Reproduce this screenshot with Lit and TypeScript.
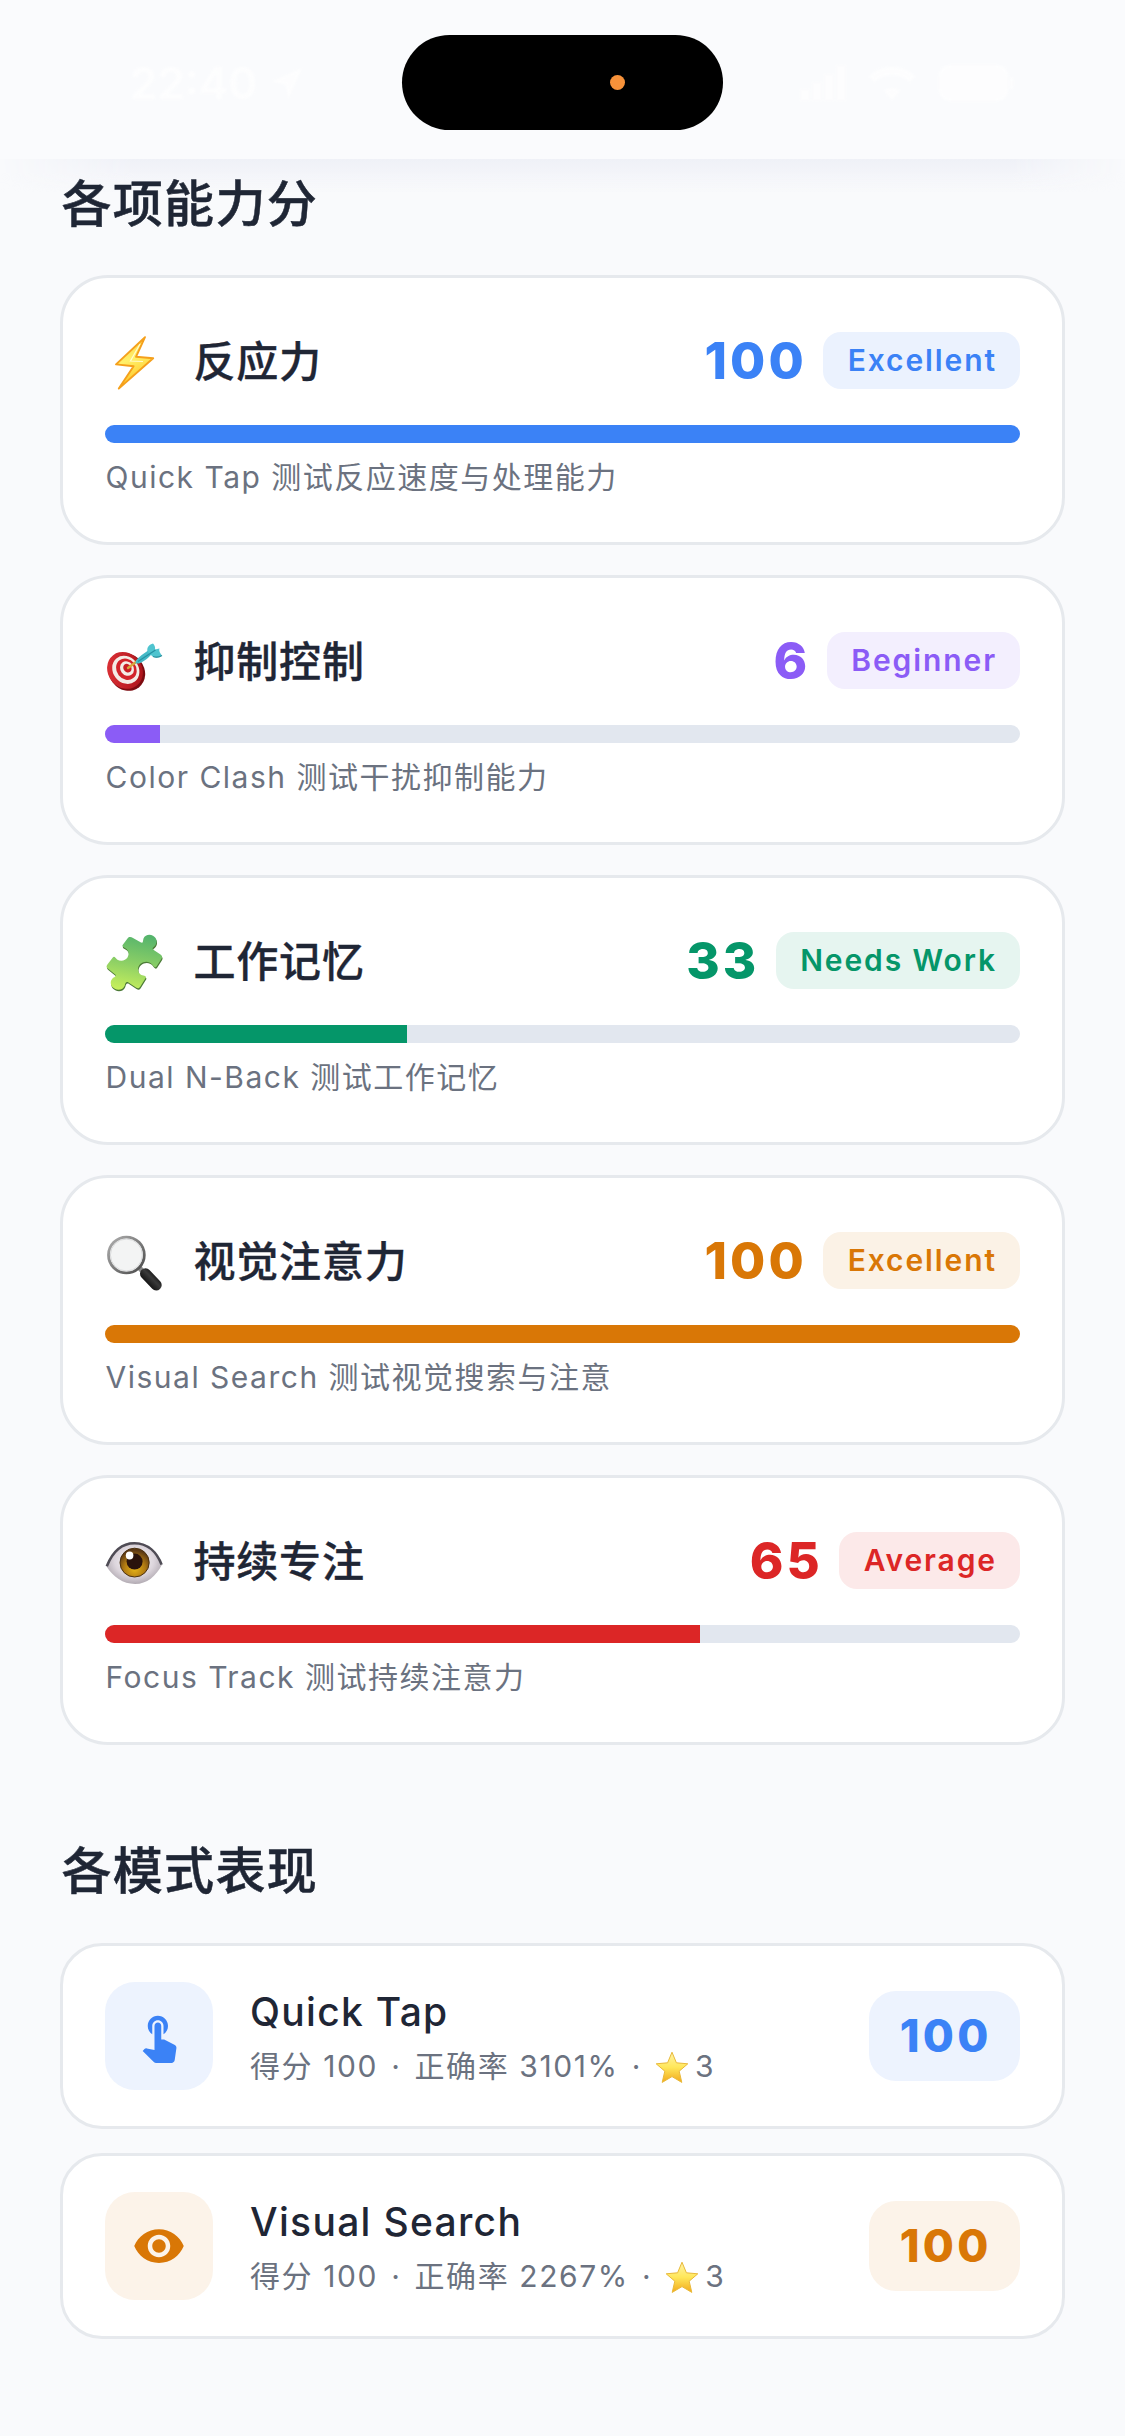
import { LitElement, html, svg, css, type TemplateResult } from "lit";
import { customElement, property } from "lit/decorators.js";
import { styleMap } from "lit/directives/style-map.js";

type Ability = {
  icon: string;
  title: string;
  score: number;
  level: string;
  note: string;
  color: string;
  tint: string;
};

type Mode = {
  icon: string;
  title: string;
  score: number;
  accuracy: string;
  stars: number;
  color: string;
  tint: string;
};

const abilities: Ability[] = [
  { icon: "bolt", title: "反应力", score: 100, level: "Excellent", note: "Quick Tap 测试反应速度与处理能力", color: "#3b82f6", tint: "#ebf2fe" },
  { icon: "dart", title: "抑制控制", score: 6, level: "Beginner", note: "Color Clash 测试干扰抑制能力", color: "#8b5cf6", tint: "#f3effe" },
  { icon: "puzzle", title: "工作记忆", score: 33, level: "Needs Work", note: "Dual N-Back 测试工作记忆", color: "#059669", tint: "#e6f5f0" },
  { icon: "lens", title: "视觉注意力", score: 100, level: "Excellent", note: "Visual Search 测试视觉搜索与注意", color: "#d97706", tint: "#fbf2e6" },
  { icon: "eye", title: "持续专注", score: 65, level: "Average", note: "Focus Track 测试持续注意力", color: "#dc2626", tint: "#fce9e9" },
];

const modes: Mode[] = [
  { icon: "touch", title: "Quick Tap", score: 100, accuracy: "3101%", stars: 3, color: "#3b82f6", tint: "#edf3fe" },
  { icon: "visibility", title: "Visual Search", score: 100, accuracy: "2267%", stars: 3, color: "#d97706", tint: "#fcf3e9" },
];

const pictures: Record<string, TemplateResult> = {
  bolt: svg`
    <defs><linearGradient id="g" x1="0" y1="0" x2="0.3" y2="1">
      <stop offset="0" stop-color="#ffc93a"/><stop offset=".5" stop-color="#fff06a"/><stop offset="1" stop-color="#ffc21f"/>
    </linearGradient></defs>
    <path d="M40 4.2 L11 31.4 L28.6 33.2 L13.8 55.6 L48.2 25.2 L31 23.8 Z" fill="url(#g)" stroke="#f5a01c" stroke-width="1.9" stroke-linejoin="round"/>
    <path d="M35 11 L25.5 28 L38 28.5" fill="none" stroke="#fffbd0" stroke-width="1.2"/>`,
  dart: svg`
    <defs><linearGradient id="g" x1="0" y1="0" x2="1" y2="1">
      <stop offset="0" stop-color="#e2353a"/><stop offset="1" stop-color="#a50f16"/>
    </linearGradient></defs>
    <ellipse cx="21.8" cy="39" rx="17.6" ry="19.6" transform="rotate(-38 21.8 39)" fill="#7d0b10"/>
    <ellipse cx="20" cy="37.4" rx="17" ry="19.3" transform="rotate(-38 20 37.4)" fill="url(#g)"/>
    <ellipse cx="20.8" cy="36.8" rx="12.8" ry="14.8" transform="rotate(-38 20.8 36.8)" fill="#f4ece6"/>
    <ellipse cx="21.4" cy="36.2" rx="9.8" ry="11.2" transform="rotate(-38 21.4 36.2)" fill="#d2232a"/>
    <ellipse cx="22" cy="35.6" rx="6.6" ry="7.6" transform="rotate(-38 22 35.6)" fill="#f4ece6"/>
    <ellipse cx="22.4" cy="35.2" rx="3.9" ry="4.6" transform="rotate(-38 22.4 35.2)" fill="#c91d25"/>
    <path d="M23 35 L33 27.5" stroke="#d8a53b" stroke-width="2.4" stroke-linecap="round"/>
    <path d="M30.5 30.5 C30 26 38 21 43 17.5 L46.5 21.5 C42 26 36 31.5 30.5 30.5Z" fill="#45b9c6"/>
    <path d="M42.5 18.5 C41.5 14 44.5 11.5 48 10.5 C49.5 12 50.5 14 50 16.5 L54.5 15.5 C53.5 18 55.5 20.5 57 22.5 C53.5 25.5 49 25.5 46 22Z" fill="#4fc4cf"/>
    <path d="M33 28.5 L50.5 17" stroke="#2591a3" stroke-width="1.3"/>
    <path d="M48 23.5 C51 24.5 54 24.5 57 22.5" stroke="#2b8e9c" stroke-width="1.2" fill="none"/>`,
  puzzle: svg`
    <defs><linearGradient id="g" x1="0.6" y1="0" x2="0.4" y2="1">
      <stop offset="0" stop-color="#55b46c"/><stop offset=".55" stop-color="#8ed065"/><stop offset="1" stop-color="#c4ee5c"/>
    </linearGradient></defs>
    <path d="M22.5 5.5 C24 3.5 26 3.8 28 5 L36 9.6 C38.5 10.5 37.8 7.5 38.5 5.5 C40 2 44.5 .8 48 2.8 C52 5 52.5 9.5 50.2 12.5 C48.8 14.3 46.8 14.8 48 16.4 L55.5 21.5 C57.3 22.8 57.5 24 56.5 25.8 L51.5 33.5 C50 35.5 48.3 33 47 31.2 C44.5 28 39 27.8 35.5 30.8 C32 34 32.3 39 35.6 41.5 C37.5 42.8 41.8 42.3 40.8 44.8 L35 54 C33.8 55.8 32.5 55.6 31 54.6 L23.5 49.5 C21 48.2 20.5 50 19.8 52.5 C18.5 56.5 13.5 58 9.8 55.8 C5.5 53.5 4.5 49 7.3 45.8 C9 43.8 11.5 43.8 10.5 41.8 L2.8 35.5 C1.2 34.2 1.2 33 2.4 31.4 L7.8 24.5 C9.5 22.6 10.5 25.4 12 26.4 C15.5 28.6 20.5 27.8 22.5 24.5 C25 20.2 23 16.4 19.5 14.8 C17.5 13.8 16.8 13.4 17.8 11.8Z" fill="#4c7a37" transform="translate(.5 1.4)"/>
    <path d="M22.5 5.5 C24 3.5 26 3.8 28 5 L36 9.6 C38.5 10.5 37.8 7.5 38.5 5.5 C40 2 44.5 .8 48 2.8 C52 5 52.5 9.5 50.2 12.5 C48.8 14.3 46.8 14.8 48 16.4 L55.5 21.5 C57.3 22.8 57.5 24 56.5 25.8 L51.5 33.5 C50 35.5 48.3 33 47 31.2 C44.5 28 39 27.8 35.5 30.8 C32 34 32.3 39 35.6 41.5 C37.5 42.8 41.8 42.3 40.8 44.8 L35 54 C33.8 55.8 32.5 55.6 31 54.6 L23.5 49.5 C21 48.2 20.5 50 19.8 52.5 C18.5 56.5 13.5 58 9.8 55.8 C5.5 53.5 4.5 49 7.3 45.8 C9 43.8 11.5 43.8 10.5 41.8 L2.8 35.5 C1.2 34.2 1.2 33 2.4 31.4 L7.8 24.5 C9.5 22.6 10.5 25.4 12 26.4 C15.5 28.6 20.5 27.8 22.5 24.5 C25 20.2 23 16.4 19.5 14.8 C17.5 13.8 16.8 13.4 17.8 11.8Z" fill="url(#g)"/>`,
  lens: svg`
    <defs>
      <linearGradient id="g" x1="0" y1="0" x2="1" y2="1"><stop offset="0" stop-color="#b0b0b0"/><stop offset="1" stop-color="#4a4a4a"/></linearGradient>
      <linearGradient id="h" x1="0" y1="1" x2="1" y2="0"><stop offset="0" stop-color="#0a0a0a"/><stop offset=".6" stop-color="#3a3a3a"/><stop offset="1" stop-color="#111"/></linearGradient>
    </defs>
    <path d="M34.5 35 L40 40.5" stroke="#8a8a8a" stroke-width="5"/>
    <path d="M40.5 40.8 L51.2 52" stroke="url(#h)" stroke-width="11" stroke-linecap="round"/>
    <circle cx="21.4" cy="22" r="17.9" fill="#f3f4f4" stroke="url(#g)" stroke-width="2.8"/>
    <circle cx="21.4" cy="22" r="16" fill="none" stroke="#d9dadb" stroke-width="1"/>`,
  eye: svg`
    <defs>
      <radialGradient id="g" cx=".5" cy=".45" r=".6"><stop offset="0" stop-color="#fff"/><stop offset=".6" stop-color="#dcd5dc"/><stop offset="1" stop-color="#a7a0a8"/></radialGradient>
      <radialGradient id="h" cx=".5" cy=".72" r=".65"><stop offset="0" stop-color="#e6b417"/><stop offset=".55" stop-color="#b17a12"/><stop offset="1" stop-color="#5b3814"/></radialGradient>
    </defs>
    <path d="M1.6 33.6 C7 20 16 9 29.5 9 C43 9 52 19 56.8 32 C51 43 42 51 30 51 C18 51 8 44 1.6 33.6Z" fill="url(#g)"/>
    <path d="M1.8 33.2 C7 20 16 10.2 29.5 10.2 C43 10.2 52 19.6 56.6 31.6" fill="none" stroke="#4f4c55" stroke-width="2.6"/>
    <ellipse cx="29.6" cy="29.6" rx="14.6" ry="14.4" fill="url(#h)" stroke="#4a3010" stroke-width="1"/>
    <circle cx="29.6" cy="28.6" r="8" fill="#2a130c"/>
    <ellipse cx="24.6" cy="22.6" rx="3.8" ry="4" fill="#fff"/>`,
};

const glyphs: Record<string, TemplateResult> = {
  touch: svg`<path d="M9 11.24V7.5C9 6.12 10.12 5 11.5 5S14 6.12 14 7.5v3.74c1.21-.81 2-2.18 2-3.74C16 5.01 13.99 3 11.5 3S7 5.01 7 7.5c0 1.56.79 2.93 2 3.74zm9.84 4.63l-4.54-2.26c-.17-.07-.35-.11-.54-.11H13v-6c0-.83-.67-1.5-1.5-1.5S10 6.67 10 7.5v10.74l-3.43-.72c-.08-.01-.15-.03-.24-.03-.31 0-.59.13-.79.33l-.79.8 4.94 4.94c.27.27.65.44 1.06.44h6.79c.75 0 1.33-.55 1.44-1.28l.75-5.27c.01-.07.02-.14.02-.2 0-.62-.38-1.16-.91-1.38z"/>`,
  visibility: svg`<path d="M12 4.5C7 4.5 2.73 7.61 1 12c1.73 4.39 6 7.5 11 7.5s9.27-3.11 11-7.5c-1.73-4.39-6-7.5-11-7.5zM12 17c-2.76 0-5-2.24-5-5s2.24-5 5-5 5 2.24 5 5-2.24 5-5 5zm0-8c-1.66 0-3 1.34-3 3s1.34 3 3 3 3-1.34 3-3-1.34-3-3-3z"/>`,
};

@customElement("ability-card")
export class AbilityCard extends LitElement {
  @property({ attribute: false }) item!: Ability;

  static styles = css`
    :host { display: block; }
    .card { box-sizing: border-box; height: 270px; padding: 42px; background: #fff; border: 3px solid #e6e9ed; border-radius: 48px; }
    .row { display: flex; align-items: center; height: 81px; }
    .picture { width: 60px; height: 60px; margin-top: 5px; flex: none; }
    .title { flex: 1; margin: 0 0 5px 28.5px; font-size: 42px; font-weight: 500; letter-spacing: 0.8px; -webkit-text-stroke: 0.35px; color: #1f2635; white-space: nowrap; }
    .score { font-size: 51px; font-weight: 800; letter-spacing: 3px; }
    .badge { box-sizing: border-box; height: 57px; line-height: 57px; margin-left: 16.5px; padding: 0 23px 0 24.5px; border-radius: 18px; font-size: 30px; font-weight: 600; letter-spacing: 1.9px; white-space: nowrap; }
    .track { height: 18px; margin-top: 24px; border-radius: 9px; overflow: hidden; background: #e2e7ef; }
    .fill { height: 100%; }
    .note { margin-top: 12px; padding-left: 0.5px; font-size: 30px; font-weight: 380; line-height: 45px; letter-spacing: 1.5px; color: #6b7280; white-space: nowrap; }
  `;

  render() {
    const a = this.item;
    return html`
      <div class="card">
        <div class="row">
          <svg class="picture" viewBox="0 0 60 60">${pictures[a.icon]}</svg>
          <div class="title">${a.title}</div>
          <div class="score" style=${styleMap({ color: a.color })}>${a.score}</div>
          <div class="badge" style=${styleMap({ color: a.color, background: a.tint })}>${a.level}</div>
        </div>
        <div class="track"><div class="fill" style=${styleMap({ width: `${a.score}%`, background: a.color })}></div></div>
        <div class="note">${a.note}</div>
      </div>
    `;
  }
}

@customElement("mode-card")
export class ModeCard extends LitElement {
  @property({ attribute: false }) item!: Mode;

  static styles = css`
    :host { display: block; }
    .card { box-sizing: border-box; display: flex; align-items: center; height: 186px; padding: 0 42px; background: #fff; border: 3px solid #e6e9ed; border-radius: 42px; }
    .tile { display: flex; align-items: center; justify-content: center; width: 108px; height: 108px; border-radius: 30px; flex: none; }
    .glyph { width: 54px; height: 54px; fill: currentColor; }
    .body { flex: 1; margin-left: 37px; }
    .title { font-size: 39px; font-weight: 500; line-height: 58px; letter-spacing: 1.3px; color: #1f2635; }
    .detail { display: flex; align-items: center; margin-top: 3px; font-size: 30px; font-weight: 380; line-height: 45px; letter-spacing: 1.6px; color: #6b7280; white-space: pre; }
    .sep { margin: 0 3px; }
    .star { width: 34px; height: 34px; margin: 2px 6px 0 0; }
    .score { box-sizing: border-box; height: 90px; line-height: 90px; padding: 0 28.5px 0 30.5px; border-radius: 27px; font-size: 45px; font-weight: 800; letter-spacing: 3.2px; }
  `;

  render() {
    const m = this.item;
    const tone = styleMap({ color: m.color, background: m.tint });
    return html`
      <div class="card">
        <div class="tile" style=${tone}><svg class="glyph" viewBox="0 0 24 24">${glyphs[m.icon]}</svg></div>
        <div class="body">
          <div class="title">${m.title}</div>
          <div class="detail"><span>得分 ${m.score}</span><span class="sep"> · </span><span>正确率 ${m.accuracy}</span><span class="sep"> · </span><svg class="star" viewBox="0 0 34 34">
            <defs><linearGradient id="s" x1="0" y1="0" x2="0" y2="1"><stop offset="0" stop-color="#fff3a8"/><stop offset=".5" stop-color="#ffe75a"/><stop offset="1" stop-color="#f2a91c"/></linearGradient></defs>
            <path d="M17 1.2 L21.4 11.8 L32.8 12.8 L24.2 20.2 L26.8 31.4 L17 25.6 L7.2 31.4 L9.8 20.2 L1.2 12.8 L12.6 11.8Z" fill="url(#s)" stroke="#e9b93a" stroke-width="1" stroke-linejoin="round"/>
          </svg><span>${m.stars}</span></div>
        </div>
        <div class="score" style=${tone}>${m.score}</div>
      </div>
    `;
  }
}

@customElement("app-root")
export class AppRoot extends LitElement {
  static styles = css`
    :host { display: block; width: 1125px; min-height: 2436px; background: #f9fafc; font-family: Inter, "Noto Sans CJK SC", sans-serif; }
    .bar { position: relative; box-sizing: border-box; display: grid; grid-template-columns: 402px 321px 402px; height: 159px; padding-top: 35px; background: #fafbfd; }
    .bar::after { content: ""; position: absolute; left: 0; right: 0; top: 159px; height: 34px; background: linear-gradient(#eff1f7, #f3f4f9 40%, #f9fafc00); -webkit-mask-image: linear-gradient(90deg, transparent, #000 12%, #000 90%, transparent); mask-image: linear-gradient(90deg, transparent, #000 12%, #000 90%, transparent); }
    .side { display: flex; align-items: center; height: 95px; gap: 12px; color: #fff; fill: #fff; font-size: 44px; font-weight: 600; opacity: 0.7; filter: blur(1.2px); }
    .left { padding-left: 130px; }
    .right { padding-left: 78px; gap: 24px; }
    .island { display: flex; align-items: center; box-sizing: border-box; height: 95px; padding-left: 208px; border-radius: 48px; background: #000; }
    .dot { width: 15px; height: 15px; border-radius: 50%; background: #f7923a; }
    .page { padding: 9px 60px 97px; }
    .heading { position: relative; margin: 0; padding-left: 1.5px; font-size: 50px; font-weight: 500; line-height: 72px; letter-spacing: 1.3px; -webkit-text-stroke: 0.5px; color: #1f2635; }
    .abilities { display: grid; gap: 30px; margin: 35px 0 90px; }
    .modes { display: grid; gap: 24px; margin-top: 36px; }
  `;

  render() {
    return html`
      <header class="bar">
        <div class="side left">
          <span>22:40</span>
          <svg width="36" height="36" viewBox="0 0 24 24"><path d="M22 2 2 11l9 2 2 9z"/></svg>
        </div>
        <div class="island"><div class="dot"></div></div>
        <div class="side right">
          <svg width="44" height="34" viewBox="0 0 44 34"><path d="M0 24h8v10H0zM12 17h8v17h-8zM24 9h8v25h-8zM36 0h8v34h-8z"/></svg>
          <svg width="46" height="34" viewBox="0 0 46 34"><path d="M23 34 15 25a12 12 0 0 1 16 0zM0 10a34 34 0 0 1 46 0l-5 6a27 27 0 0 0-36 0z"/></svg>
          <svg width="74" height="36" viewBox="0 0 74 36"><rect width="69" height="36" rx="11"/><rect x="71" y="12" width="3" height="12" rx="1.5"/></svg>
        </div>
      </header>
      <main class="page">
        <h2 class="heading">各项能力分</h2>
        <div class="abilities">${abilities.map((a) => html`<ability-card .item=${a}></ability-card>`)}</div>
        <h2 class="heading">各模式表现</h2>
        <div class="modes">${modes.map((m) => html`<mode-card .item=${m}></mode-card>`)}</div>
      </main>
    `;
  }
}
